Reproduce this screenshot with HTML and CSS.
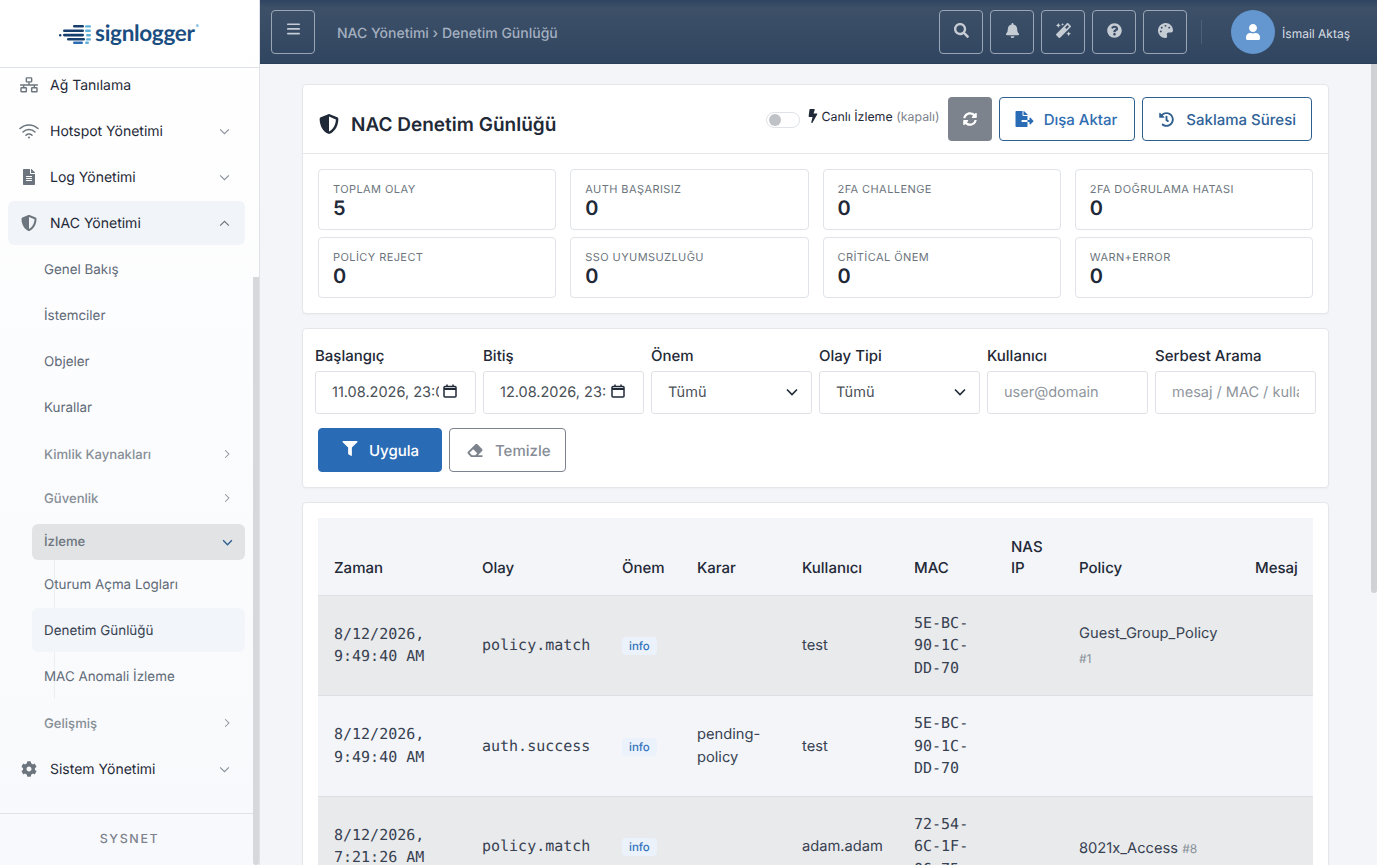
FILE: index.html
```html
<!DOCTYPE html>
<html lang="tr">
<head>
<meta charset="utf-8">
<title>NAC Denetim Günlüğü</title>
<link rel="stylesheet" href="styles.css">
</head>
<body>
<div class="app">
  <aside class="sidebar">
    <div class="brand">
      <svg class="brand-mark" viewBox="0 0 32 19">
        <g fill="#173f6e">
          <rect x="14" y="0" width="11" height="2.6" rx="1.3"/>
          <rect x="4" y="4.4" width="21" height="2.6" rx="1.3"/>
          <rect x="0" y="9" width="2.4" height="2.4" rx="1.2"/>
          <rect x="4" y="8.8" width="21" height="2.6" rx="1.3"/>
          <rect x="8" y="13" width="18" height="2.6" rx="1.3"/>
        </g>
        <rect x="14" y="16.6" width="10" height="2.4" rx="1.2" fill="#2a6bb5"/>
        <g fill="#5fb0da">
          <rect x="26" y=".2" width="6" height="2.4" rx="1.2"/>
          <rect x="26" y="4.6" width="6" height="2.4" rx="1.2"/>
          <rect x="27" y="9" width="5" height="2.4" rx="1.2"/>
          <rect x="27" y="13.2" width="5" height="2.4" rx="1.2"/>
          <rect x="26" y="16.6" width="4" height="2.4" rx="1.2"/>
        </g>
      </svg>
      <span class="brand-name">signlogger</span><span class="brand-tm">®</span>
    </div>
    <nav class="nav">
      <a class="nav-item"><svg class="nav-ico ico-net" viewBox="0 0 20 18" fill="none" stroke="#6c757d" stroke-width="1.6"><rect x="7" y="1" width="6" height="4.5" rx=".6"/><rect x="1" y="12" width="6" height="4.5" rx=".6"/><rect x="13" y="12" width="6" height="4.5" rx=".6"/><path d="M0 9h20M10 5.5V9M4 9v3M16 9v3"/></svg><span class="nav-label">Ağ Tanılama</span></a>
      <a class="nav-item"><svg class="nav-ico" viewBox="0 0 20 16" fill="none" stroke="#6c757d" stroke-width="1.5" stroke-linecap="round"><path d="M1 5.5a13 13 0 0 1 18 0M4 9a8.6 8.6 0 0 1 12 0M7 12.2a4.2 4.2 0 0 1 6 0"/><circle cx="10" cy="14.6" r="1" fill="#6c757d" stroke="none"/></svg><span class="nav-label">Hotspot Yönetimi</span><svg class="chev" viewBox="0 0 12 8"><path d="M1 1.5l5 5 5-5"/></svg></a>
      <a class="nav-item"><svg class="nav-ico ico-file" viewBox="0 0 384 512" fill="#6c757d"><path d="M224 136V0H24C10.7 0 0 10.7 0 24v464c0 13.3 10.7 24 24 24h336c13.3 0 24-10.7 24-24V160H248c-13.2 0-24-10.8-24-24zm64 236c0 6.6-5.4 12-12 12H108c-6.6 0-12-5.4-12-12v-8c0-6.6 5.4-12 12-12h168c6.6 0 12 5.4 12 12v8zm0-64c0 6.6-5.4 12-12 12H108c-6.6 0-12-5.4-12-12v-8c0-6.6 5.4-12 12-12h168c6.6 0 12 5.4 12 12v8zm0-72v8c0 6.6-5.4 12-12 12H108c-6.6 0-12-5.4-12-12v-8c0-6.6 5.4-12 12-12h168c6.6 0 12 5.4 12 12zm96-114.1v6.1H256V0h6.1c6.4 0 12.5 2.5 17 7l97.9 98c4.5 4.5 7 10.6 7 16.9z"/></svg><span class="nav-label">Log Yönetimi</span><svg class="chev" viewBox="0 0 12 8"><path d="M1 1.5l5 5 5-5"/></svg></a>
      <a class="nav-item is-open"><svg class="nav-ico ico-shield" viewBox="0 0 512 512" fill="#6c757d"><path d="M466.5 83.7l-192-80a48.15 48.15 0 0 0-36.9 0l-192 80C27.7 91.1 16 108.6 16 128c0 198.5 114.5 335.7 221.5 380.3 11.8 4.9 25.1 4.9 36.9 0C360.1 472.6 496 349.3 496 128c0-19.4-11.7-36.9-29.5-44.3zM256.1 446.3l-.1-381 175.9 73.3c-3.3 151.4-82.1 261.1-175.8 307.7z"/></svg><span class="nav-label">NAC Yönetimi</span><svg class="chev" viewBox="0 0 12 8"><path d="M1 6.5l5-5 5 5"/></svg></a>
      <div class="subnav">
        <a class="sub-item">Genel Bakış</a>
        <a class="sub-item">İstemciler</a>
        <a class="sub-item">Objeler</a>
        <a class="sub-item">Kurallar</a>
        <a class="sub-group">Kimlik Kaynakları<svg class="chev-side" viewBox="0 0 8 12"><path d="M1.5 1l5 5-5 5"/></svg></a>
        <a class="sub-group sub-group-b">Güvenlik<svg class="chev-side" viewBox="0 0 8 12"><path d="M1.5 1l5 5-5 5"/></svg></a>
        <a class="sub-group is-open">İzleme<svg class="chev-down" viewBox="0 0 12 8"><path d="M1 1.5l5 5 5-5"/></svg></a>
        <div class="sub-tree">
          <a class="sub-item">Oturum Açma Logları</a>
          <a class="sub-item is-active">Denetim Günlüğü</a>
          <a class="sub-item">MAC Anomali İzleme</a>
        </div>
        <a class="sub-group sub-group-c">Gelişmiş<svg class="chev-side" viewBox="0 0 8 12"><path d="M1.5 1l5 5-5 5"/></svg></a>
      </div>
      <a class="nav-item nav-item-last"><svg class="nav-ico ico-cog" viewBox="0 0 512 512" fill="#6c757d"><path d="M487.4 315.7l-42.6-24.6c4.3-23.2 4.3-47 0-70.2l42.6-24.6c4.9-2.8 7.1-8.6 5.5-14-11.1-35.6-30-67.8-54.7-94.6-3.8-4.1-10-5.1-14.8-2.3L380.8 110c-17.9-15.4-38.5-27.3-60.8-35.1V25.8c0-5.6-3.9-10.5-9.4-11.7-36.7-8.2-74.3-7.8-109.2 0-5.5 1.2-9.4 6.1-9.4 11.7V75c-22.2 7.9-42.8 19.8-60.8 35.1L88.7 85.5c-4.9-2.8-11-1.9-14.8 2.3-24.7 26.7-43.6 58.9-54.7 94.6-1.7 5.4.6 11.2 5.5 14L67.3 221c-4.3 23.2-4.3 47 0 70.2l-42.6 24.6c-4.9 2.8-7.1 8.6-5.5 14 11.1 35.6 30 67.8 54.7 94.6 3.8 4.1 10 5.1 14.8 2.3l42.6-24.6c17.9 15.4 38.5 27.3 60.8 35.1v49.2c0 5.6 3.9 10.5 9.4 11.7 36.7 8.2 74.3 7.8 109.2 0 5.5-1.2 9.4-6.1 9.4-11.7v-49.2c22.2-7.9 42.8-19.8 60.8-35.1l42.6 24.6c4.9 2.8 11 1.9 14.8-2.3 24.7-26.7 43.6-58.9 54.7-94.6 1.5-5.5-.7-11.3-5.6-14.1zM256 336c-44.1 0-80-35.9-80-80s35.9-80 80-80 80 35.9 80 80-35.9 80-80 80z"/></svg><span class="nav-label">Sistem Yönetimi</span><svg class="chev" viewBox="0 0 12 8"><path d="M1 1.5l5 5 5-5"/></svg></a>
    </nav>
    <div class="side-foot">SYSNET</div>
    <div class="side-thumb"></div>
  </aside>

  <div class="main">
    <header class="topbar">
      <button class="top-btn"><svg class="ti ti-bars" viewBox="0 0 14 12" fill="#c6ccd4"><rect y="0" width="14" height="1.8" rx=".9"/><rect y="5" width="14" height="1.8" rx=".9"/><rect y="10" width="14" height="1.8" rx=".9"/></svg></button>
      <div class="crumb">NAC Yönetimi › Denetim Günlüğü</div>
      <div class="top-actions">
        <button class="top-btn"><svg class="ti" viewBox="0 0 512 512"><path d="M505 442.7L405.3 343c-4.5-4.5-10.6-7-17-7H372c27.6-35.3 44-79.7 44-128C416 93.1 322.9 0 208 0S0 93.1 0 208s93.1 208 208 208c48.3 0 92.7-16.4 128-44v16.3c0 6.4 2.5 12.5 7 17l99.7 99.7c9.4 9.4 24.6 9.4 33.9 0l28.3-28.3c9.4-9.4 9.4-24.6.1-34zM208 336c-70.7 0-128-57.2-128-128 0-70.7 57.2-128 128-128 70.7 0 128 57.2 128 128 0 70.7-57.2 128-128 128z"/></svg></button>
        <button class="top-btn"><svg class="ti" viewBox="0 0 448 512"><path d="M224 512c35.32 0 63.97-28.65 63.97-64H160.03c0 35.35 28.65 64 63.97 64zm215.39-149.71c-19.32-20.76-55.47-51.99-55.47-154.29 0-77.7-54.48-139.9-127.94-155.16V32c0-17.67-14.32-32-31.98-32s-31.98 14.33-31.98 32v20.84C118.56 68.1 64.08 130.3 64.08 208c0 102.3-36.15 133.53-55.47 154.29-6 6.45-8.66 14.16-8.61 21.71.11 16.4 12.98 32 32.1 32h383.8c19.12 0 32-15.6 32.1-32 .05-7.55-2.61-15.27-8.61-21.71z"/></svg></button>
        <button class="top-btn"><svg class="ti" viewBox="0 0 512 512"><path d="M224 96l16-32 32-16-32-16-16-32-16 32-32 16 32 16 16 32zM80 160l26.66-53.33L160 80l-53.34-26.67L80 0 53.34 53.33 0 80l53.34 26.67L80 160zm352 128l-26.66 53.33L352 368l53.34 26.67L432 448l26.66-53.33L512 368l-53.34-26.67L432 288zm70.62-193.77L417.77 9.38C411.53 3.12 403.34 0 395.15 0c-8.19 0-16.38 3.12-22.63 9.38L9.38 372.52c-12.5 12.5-12.5 32.76 0 45.25l84.85 84.85c6.25 6.25 14.44 9.37 22.62 9.37 8.19 0 16.38-3.12 22.63-9.37l363.14-363.15c12.5-12.48 12.5-32.75 0-45.24zM359.45 203.46l-50.91-50.91 86.6-86.6 50.91 50.91-86.6 86.6z"/></svg></button>
        <button class="top-btn"><svg class="ti" viewBox="0 0 512 512"><path d="M504 256c0 136.997-111.043 248-248 248S8 392.997 8 256C8 119.083 119.043 8 256 8s248 111.083 248 248zM262.655 90c-54.497 0-89.255 22.957-116.549 63.758-3.536 5.286-2.353 12.415 2.715 16.258l34.699 26.31c5.205 3.947 12.621 3.008 16.665-2.122 17.864-22.658 30.113-35.797 57.303-35.797 20.429 0 45.698 13.148 45.698 32.958 0 14.976-12.363 22.667-32.534 33.976C247.128 238.528 216 254.941 216 296v4c0 6.627 5.373 12 12 12h56c6.627 0 12-5.373 12-12v-1.333c0-28.462 83.186-29.647 83.186-106.667 0-58.002-60.165-102-116.531-102zM256 338c-25.365 0-46 20.635-46 46 0 25.364 20.635 46 46 46s46-20.636 46-46c0-25.365-20.635-46-46-46z"/></svg></button>
        <button class="top-btn"><svg class="ti" viewBox="0 0 512 512"><path d="M204.3 5C104.9 24.4 24.8 104.3 5.2 203.4c-37 187 131.7 326.4 258.8 306.7 41.2-6.4 61.4-54.6 42.5-91.7-23.1-45.4 9.9-98.4 60.9-98.4h79.7c35.8 0 64.8-29.6 64.9-65.3C511.5 97.1 368.1-26.9 204.3 5zM96 320c-17.7 0-32-14.3-32-32s14.3-32 32-32 32 14.3 32 32-14.3 32-32 32zm32-128c-17.7 0-32-14.3-32-32s14.3-32 32-32 32 14.3 32 32-14.3 32-32 32zm128-64c-17.7 0-32-14.3-32-32s14.3-32 32-32 32 14.3 32 32-14.3 32-32 32zm128 64c-17.7 0-32-14.3-32-32s14.3-32 32-32 32 14.3 32 32-14.3 32-32 32z"/></svg></button>
      </div>
      <div class="top-sep"></div>
      <div class="avatar"><svg viewBox="0 0 448 512" fill="#fff"><path d="M224 256c70.7 0 128-57.3 128-128S294.7 0 224 0 96 57.3 96 128s57.3 128 128 128zm89.6 32h-16.7c-22.2 10.2-46.9 16-72.9 16s-50.6-5.8-72.9-16h-16.7C60.2 288 0 348.2 0 422.4V464c0 26.5 21.5 48 48 48h352c26.5 0 48-21.5 48-48v-41.6c0-74.2-60.2-134.4-134.4-134.4z"/></svg></div>
      <div class="user-name">İsmail Aktaş</div>
    </header>

    <main class="content">
      <section class="card">
        <div class="card-head">
          <h1 class="title"><svg class="title-ico" viewBox="0 0 512 512" fill="#1f2937"><path d="M466.5 83.7l-192-80a48.15 48.15 0 0 0-36.9 0l-192 80C27.7 91.1 16 108.6 16 128c0 198.5 114.5 335.7 221.5 380.3 11.8 4.9 25.1 4.9 36.9 0C360.1 472.6 496 349.3 496 128c0-19.4-11.7-36.9-29.5-44.3zM256.1 446.3l-.1-381 175.9 73.3c-3.3 151.4-82.1 261.1-175.8 307.7z"/></svg>NAC Denetim Günlüğü</h1>
          <div class="head-tools">
            <span class="toggle"><i class="toggle-dot"></i></span>
            <span class="live"><svg class="bolt" viewBox="0 0 320 512" fill="#1f2937"><path d="M296 160H180.6l42.6-129.8C227.2 15 215.7 0 200 0H56C44 0 33.8 8.9 32.2 20.8l-32 240C-1.7 275.2 9.5 288 24 288h118.7L96.6 482.5c-3.6 15.2 8 29.5 23.3 29.5 8.4 0 16.4-4.4 20.8-12l176-304c9.3-15.9-2.2-36-20.7-36z"/></svg><span>Canlı İzleme <span class="live-off">(kapalı)</span></span></span>
            <button class="btn-refresh"><svg viewBox="0 0 512 512" fill="#fff"><path d="M370.72 133.28C339.458 104.008 298.888 87.962 255.848 88c-77.458.068-144.328 53.178-162.791 126.85-1.344 5.363-6.122 9.15-11.651 9.15H24.103c-7.498 0-13.194-6.807-11.807-14.176C33.933 94.924 134.813 8 256 8c66.448 0 126.791 26.136 171.315 68.685L463.03 40.97C478.149 25.851 504 36.559 504 57.941V192c0 13.255-10.745 24-24 24H345.941c-21.382 0-32.09-25.851-16.971-40.971l41.75-41.749zM32 296h134.059c21.382 0 32.09 25.851 16.971 40.971l-41.75 41.75c31.262 29.273 71.835 45.319 114.876 45.28 77.418-.07 144.315-53.144 162.787-126.849 1.344-5.363 6.122-9.15 11.651-9.15h57.304c7.498 0 13.194 6.807 11.807 14.176C478.067 417.076 377.187 504 256 504c-66.448 0-126.791-26.136-171.315-68.685L48.97 471.03C33.851 486.149 8 475.441 8 454.059V320c0-13.255 10.745-24 24-24z"/></svg></button>
            <button class="btn-outline"><svg class="bi-export" viewBox="0 0 576 512" fill="#2a6bb5"><path d="M384 121.9c0-6.3-2.5-12.4-7-16.9L279.1 7c-4.5-4.5-10.6-7-17-7H256v128h128zM571 308l-95.7-96.4c-10.1-10.1-27.4-3-27.4 11.3V288h-64v64h64v65.2c0 14.3 17.3 21.4 27.4 11.3L571 332c6.6-6.6 6.6-17.4 0-24zm-379 28v-32c0-8.8 7.2-16 16-16h176V160H248c-13.2 0-24-10.8-24-24V0H24C10.7 0 0 10.7 0 24v464c0 13.3 10.7 24 24 24h336c13.3 0 24-10.7 24-24V352H208c-8.8 0-16-7.2-16-16z"/></svg>Dışa Aktar</button>
            <button class="btn-outline btn-teal"><svg class="bi-history" viewBox="0 0 512 512" fill="#2f5f8f"><path d="M504 255.531c.253 136.64-111.18 248.372-247.82 248.468-59.015.042-113.223-20.53-155.822-54.911-11.077-8.94-11.905-25.541-1.839-35.607l11.267-11.267c8.609-8.609 22.353-9.551 31.891-1.984C173.062 425.135 212.781 440 256 440c101.705 0 184-82.311 184-184 0-101.705-82.311-184-184-184-48.814 0-93.149 18.969-126.068 49.932l50.754 50.754c10.08 10.08 2.941 27.314-11.313 27.314H24c-8.837 0-16-7.163-16-16V38.627c0-14.254 17.234-21.393 27.314-11.314l49.372 49.372C129.209 34.136 189.552 8 256 8c136.81 0 247.747 110.78 248 247.531zm-180.912 78.784l9.823-12.63c8.138-10.463 6.253-25.542-4.21-33.679L288 256.349V152c0-13.255-10.745-24-24-24h-16c-13.255 0-24 10.745-24 24v135.651l65.409 50.874c10.463 8.137 25.541 6.253 33.679-4.21z"/></svg>Saklama Süresi</button>
          </div>
        </div>
        <div class="stats">
          <div class="stat"><div class="stat-label">Toplam Olay</div><div class="stat-value">5</div></div>
          <div class="stat"><div class="stat-label">Auth Başarısız</div><div class="stat-value">0</div></div>
          <div class="stat"><div class="stat-label">2FA Challenge</div><div class="stat-value">0</div></div>
          <div class="stat"><div class="stat-label">2FA Doğrulama Hatası</div><div class="stat-value">0</div></div>
          <div class="stat"><div class="stat-label">Policy Reject</div><div class="stat-value">0</div></div>
          <div class="stat"><div class="stat-label">SSO Uyumsuzluğu</div><div class="stat-value">0</div></div>
          <div class="stat"><div class="stat-label">Critical Önem</div><div class="stat-value">0</div></div>
          <div class="stat"><div class="stat-label">Warn+Error</div><div class="stat-value">0</div></div>
        </div>
      </section>

      <section class="card filters">
        <div class="filter-grid">
          <label class="field"><span class="field-label">Başlangıç</span><span class="input-wrap"><input class="input input-date" type="text" value="11.08.2026, 23:00" readonly><svg class="cal" viewBox="0 0 14 14" fill="none" stroke="#1f2937"><rect x="1" y="2.5" width="12" height="10.5" rx="1" stroke-width="1.5"/><path d="M1 5h12" stroke-width="2"/><path d="M4 .5v2M10 .5v2" stroke-width="1.5"/></svg></span></label>
          <label class="field"><span class="field-label">Bitiş</span><span class="input-wrap"><input class="input input-date input-date-b" type="text" value="12.08.2026, 23:" readonly><svg class="cal" viewBox="0 0 14 14" fill="none" stroke="#1f2937"><rect x="1" y="2.5" width="12" height="10.5" rx="1" stroke-width="1.5"/><path d="M1 5h12" stroke-width="2"/><path d="M4 .5v2M10 .5v2" stroke-width="1.5"/></svg></span></label>
          <label class="field"><span class="field-label">Önem</span><span class="input-wrap"><span class="input select">Tümü</span><svg class="sel-arrow" viewBox="0 0 12 8"><path d="M1 1.5l5 5 5-5"/></svg></span></label>
          <label class="field"><span class="field-label">Olay Tipi</span><span class="input-wrap"><span class="input select">Tümü</span><svg class="sel-arrow" viewBox="0 0 12 8"><path d="M1 1.5l5 5 5-5"/></svg></span></label>
          <label class="field"><span class="field-label">Kullanıcı</span><span class="input-wrap"><input class="input" type="text" placeholder="user@domain"></span></label>
          <label class="field"><span class="field-label">Serbest Arama</span><span class="input-wrap"><input class="input" type="text" placeholder="mesaj / MAC / kullanıcı"></span></label>
        </div>
        <div class="filter-actions">
          <button class="btn-primary"><svg class="bi-filter" viewBox="0 0 512 512" fill="#fff"><path d="M487.976 0H24.028C2.71 0-8.047 25.866 7.058 40.971L192 225.941V432c0 7.831 3.821 15.17 10.237 19.662l80 55.98C298.02 518.69 320 507.493 320 487.98V225.941l184.947-184.97C520.021 25.896 509.338 0 487.976 0z"/></svg>Uygula</button>
          <button class="btn-clear"><svg class="bi-eraser" viewBox="0 0 512 512" fill="#7d838c"><path d="M497.941 273.941c18.745-18.745 18.745-49.137 0-67.882l-160-160c-18.745-18.745-49.137-18.745-67.882 0l-256 256c-18.745 18.745-18.745 49.137 0 67.882l96 96A48.004 48.004 0 0 0 144 480h356c6.627 0 12-5.373 12-12v-40c0-6.627-5.373-12-12-12H355.883l142.058-142.059zm-302.627-62.627l137.373 137.373L265.373 416H150.628l-80-80 124.686-124.686z"/></svg>Temizle</button>
        </div>
      </section>

      <section class="card table-card">
        <table class="log-table">
          <thead>
            <tr><th>Zaman</th><th>Olay</th><th>Önem</th><th>Karar</th><th>Kullanıcı</th><th>MAC</th><th>NAS IP</th><th>Policy</th><th>Mesaj</th></tr>
          </thead>
          <tbody>
            <tr><td class="mono">8/12/2026, 9:49:40 AM</td><td class="mono">policy.match</td><td><span class="badge">info</span></td><td></td><td>test</td><td class="mono">5E-BC-90-1C-DD-70</td><td></td><td class="policy">Guest_Group_Policy <small class="ref">#1</small></td><td></td></tr>
            <tr><td class="mono">8/12/2026, 9:49:40 AM</td><td class="mono">auth.success</td><td><span class="badge">info</span></td><td>pending-policy</td><td>test</td><td class="mono">5E-BC-90-1C-DD-70</td><td></td><td></td><td></td></tr>
            <tr><td class="mono">8/12/2026, 7:21:26 AM</td><td class="mono">policy.match</td><td><span class="badge">info</span></td><td></td><td>adam.adam</td><td class="mono">72-54-6C-1F-06-75</td><td></td><td class="policy">8021x_Access <small class="ref">#8</small></td><td></td></tr>
            <tr><td class="mono">8/12/2026, 7:21:26 AM</td><td class="mono">auth.success</td><td><span class="badge">info</span></td><td>pending-policy</td><td>adam.adam</td><td class="mono">72-54-6C-1F-06-75</td><td></td><td></td><td></td></tr>
            <tr><td class="mono">8/12/2026, 7:18:02 AM</td><td class="mono">policy.match</td><td><span class="badge">info</span></td><td></td><td>adam.adam</td><td class="mono">72-54-6C-1F-06-75</td><td></td><td class="policy">8021x_Access <small class="ref">#8</small></td><td></td></tr>
          </tbody>
        </table>
      </section>
    </main>
    <div class="main-thumb"></div>
  </div>
</div>
</body>
</html>
```

FILE: styles.css
```css
* { box-sizing: border-box; }
html, body { height: 100%; }
body {
  margin: 0;
  overflow: hidden;
  font-family: Inter, "Noto Sans", sans-serif;
  font-size: 15px;
  line-height: 1.5;
  color: #1f2937;
  background: #f3f5f9;
  text-rendering: geometricPrecision;
}
button, input { font-family: inherit; cursor: pointer; text-rendering: geometricPrecision; }
a { color: inherit; text-decoration: none; }
.app { display: flex; height: 100vh; }

/* Sidebar */
.sidebar {
  position: relative;
  width: 260px;
  flex: none;
  display: flex;
  flex-direction: column;
  height: 100%;
  background: linear-gradient(180deg, #ffffff 0%, #f8f9fc 100%);
  border-right: 1px solid #dfe2e6;
}
.brand {
  height: 68px;
  flex: none;
  display: flex;
  align-items: center;
  justify-content: center;
  gap: 4px;
  border-bottom: 1px solid #dfe2e6;
  padding-right: 1px;
}
.brand-mark { width: 32px; height: 19px; margin-top: 1px; }
.brand-name {
  font-family: Lato, sans-serif;
  font-size: 22.5px;
  line-height: 1;
  font-weight: 700;
  color: #1b4e80;
  letter-spacing: -.3px;
}
.brand-tm { font-size: 5px; color: #4fa3d1; margin: -12px 0 0 -3px; }
.nav {
  flex: 1;
  min-height: 0;
  overflow: hidden;
  display: flex;
  flex-direction: column;
  justify-content: flex-end;
  padding: 0 14px 23px 8px;
}
.nav-item {
  flex: none;
  height: 44px;
  margin-top: 2px;
  display: flex;
  align-items: center;
  padding: 0 15px 0 11px;
  border-radius: 6px;
  font-size: 14px;
  font-weight: 400;
  color: #1f2937;
}
.nav-item.is-open { background: #f1f4f8; }
.nav-item-last { padding-top: 2px; }
.nav-ico { width: 20px; height: 16px; flex: none; margin-right: 11px; }
.subnav {
  flex: none;
  display: flex;
  flex-direction: column;
  margin-top: 1px;
}
.nav-label { flex: 1; }
.chev { width: 11px; height: 7px; fill: none; stroke: #8a929c; stroke-width: 1.3; }
.nav-item.is-open .chev { stroke: #6c757d; }
.sub-item {
  flex: none;
  display: flex;
  align-items: center;
  height: 44px;
  margin: 1px 0 1px 24px;
  padding: 2px 0 0 12px;
  font-size: 13.4px;
  color: #5f6b78;
  border-radius: 6px;
}
.sub-item.is-active { background: #f2f5f9; color: #374151; }
.sub-group {
  flex: none;
  display: flex;
  align-items: center;
  justify-content: space-between;
  height: 36px;
  margin: 6px 0 4px 24px;
  padding: 3px 15px 0 12px;
  font-size: 13.1px;
  font-weight: 500;
  color: #868e96;
  border-radius: 6px;
}
.sub-group-b { margin-top: 4px; margin-bottom: 8px; }
.sub-group-c { margin-top: 6px; margin-bottom: 3px; }
.sub-group.is-open {
  background: #e2e3e5;
  color: #6c757d;
  margin: 0 0 1px 24px;
  padding: 2px 12px 0 12px;
}
.chev-side { width: 6px; height: 10px; fill: none; stroke: #8a929c; stroke-width: 1.4; margin-top: -3px; }
.chev-down { width: 11px; height: 7px; fill: none; stroke: #2f5f8f; stroke-width: 1.6; margin-top: -2px; }
.sub-tree { position: relative; display: flex; flex-direction: column; flex: none; }
.sub-tree::before {
  content: "";
  position: absolute;
  left: 46px;
  top: -1px;
  bottom: 0;
  width: 1px;
  background: #eceef2;
}
.sub-tree .sub-item { position: relative; }
.side-foot {
  flex: none;
  height: 52px;
  padding-top: 2px;
  border-top: 1px solid #dfe2e6;
  display: flex;
  align-items: center;
  justify-content: center;
  font-size: 12.5px;
  font-weight: 500;
  letter-spacing: 1.6px;
  color: #7d838c;
}
.side-thumb {
  position: absolute;
  right: 0;
  top: 277px;
  bottom: 0;
  width: 6px;
  background: #d6d8dc;
  border-radius: 0 0 3px 3px;
}

/* Main */
.main { position: relative; flex: 1; min-width: 0; display: flex; flex-direction: column; }
.main-thumb {
  position: absolute;
  right: 0;
  top: 64px;
  width: 6px;
  height: 529px;
  background: #cfd1d5;
  border-radius: 0 0 3px 3px;
}
.topbar {
  flex: none;
  height: 64px;
  display: flex;
  align-items: center;
  padding: 0 27px 0 11px;
  background: linear-gradient(180deg, #2e4460 0%, #3d5068 12%, #304560 100%);
  border-bottom: 1px solid #2b3f58;
}
.top-btn {
  width: 44px;
  height: 44px;
  padding: 0;
  flex: none;
  display: flex;
  align-items: center;
  justify-content: center;
  background: transparent;
  border: 1px solid #9aa6b5;
  border-radius: 4px;
}
.ti { width: 15px; height: 15px; fill: #c6ccd4; margin-top: -2px; }
.ti-bars { width: 13px; height: 12px; margin-top: -6px; }
.crumb {
  margin: 4px 0 0 22px;
  flex: 1;
  font-size: 14px;
  font-weight: 500;
  color: #a4b0c0;
  white-space: nowrap;
}
.top-actions { display: flex; gap: 7px; }
.top-sep { width: 1px; height: 24px; margin: 0 29px 0 14px; background: #4d6078; }
.avatar {
  width: 44px;
  height: 44px;
  flex: none;
  display: flex;
  align-items: center;
  justify-content: center;
  border-radius: 50%;
  background: #6497cf;
}
.avatar svg { width: 14px; height: 16px; }
.user-name { margin: 5px 0 0 7px; font-size: 12px; color: #d8dde3; white-space: nowrap; }

.content {
  flex: 1;
  min-height: 0;
  overflow: hidden;
  padding: 20px 48px 20px 42px;
}

.card {
  background: #fff;
  border: 1px solid #e4e6ea;
  border-radius: 4px;
  margin-bottom: 14px;
  box-shadow: 0 1px 2px rgba(0,0,0,.03);
}
.card-head {
  height: 69px;
  display: flex;
  align-items: center;
  justify-content: space-between;
  padding: 0 16px;
  border-bottom: 1px solid #e4e6ea;
}
.title {
  margin: 13px 0 0;
  display: flex;
  align-items: center;
  font-size: 19px;
  font-weight: 600;
  color: #1f2937;
}
.title-ico { width: 20px; height: 20px; margin: -3px 12px 0 0; }
.head-tools { display: flex; align-items: center; }
.toggle {
  position: relative;
  width: 34px;
  height: 16px;
  margin: 2px 8px 0 0;
  border: 1px solid #dfe2e6;
  border-radius: 8px;
  background: #fff;
}
.toggle-dot {
  position: absolute;
  left: 2px;
  top: 1px;
  width: 12px;
  height: 12px;
  border-radius: 50%;
  background: #bfc2c6;
}
.live { display: flex; align-items: center; gap: 3px; font-size: 12.4px; font-weight: 400; color: #1f2937; margin: -3px 8px 0 0; white-space: pre; }
.bolt { width: 10px; height: 14px; margin-top: -2px; }
.live-off { font-weight: 400; color: #7d838c; }
.btn-refresh {
  width: 44px;
  height: 44px;
  padding: 0;
  display: flex;
  align-items: center;
  justify-content: center;
  background: #7d838c;
  border: 0;
  border-radius: 4px;
  margin-right: 7px;
}
.btn-refresh svg { width: 14px; height: 14px; }
.btn-outline {
  height: 44px;
  padding: 0 17px 0 15px;
  display: flex;
  align-items: center;
  background: #fff;
  border: 1px solid #2f5f8f;
  border-radius: 4px;
  font-size: 15px;
  font-weight: 500;
  color: #2f6cb0;
}
.btn-teal { margin-left: 7px; color: #2f6298; padding: 0 15px 0 16px; }
.bi-export { width: 19px; height: 16px; margin-right: 10px; }
.bi-history { width: 15px; height: 15px; margin-right: 12px; }

.stats {
  display: grid;
  grid-template-columns: repeat(4, 1fr);
  gap: 7px 14px;
  padding: 15px;
}
.stat {
  height: 61px;
  padding: 12px 14px 0;
  border: 1px solid #e0e3e7;
  border-radius: 4px;
}
.stat-label {
  font-size: 11px;
  line-height: 14px;
  letter-spacing: .42px;
  text-transform: uppercase;
  color: #6c757d;
}
.stat-value { font-size: 20px; line-height: 24px; font-weight: 600; color: #1f2937; }

.filters { padding: 16px 12px 15px; }
.filter-grid { display: grid; grid-template-columns: repeat(6, 161px); gap: 7px; }
.field { display: block; }
.field-label { display: block; font-size: 15px; line-height: 22px; margin-bottom: 4px; font-weight: 500; color: #1f2937; }
.input-wrap { position: relative; display: block; }
.input {
  display: block;
  width: 100%;
  height: 43px;
  padding: 0 16px;
  border: 1px solid #dfe2e6;
  border-radius: 3px;
  background: #fff;
  font: 400 14.5px/41px Inter, sans-serif;
  color: #495057;
  outline: none;
}
.input::placeholder { color: #8f959c; opacity: 1; }
.input-date { padding-right: 36px; }
.input-date-b { padding-right: 32px; }
.cal { position: absolute; right: 19px; top: 13px; width: 14px; height: 14px; }
.sel-arrow { position: absolute; right: 14px; top: 17px; width: 12px; height: 8px; fill: none; stroke: #1f2937; stroke-width: 1.6; }
.filter-actions { display: flex; gap: 7px; margin: 14px 0 0 3px; }
.btn-primary, .btn-clear {
  height: 44px;
  display: flex;
  align-items: center;
  font-size: 15px;
  font-weight: 500;
  border-radius: 4px;
}
.btn-primary { width: 124px; padding: 0 0 0 23px; background: #2a6bb5; border: 1px solid #2a6bb5; color: #fff; }
.btn-clear { width: 117px; padding: 0 0 0 17px; background: #fff; border: 1px solid #7d838c; color: #868d96; }
.bi-filter { width: 16px; height: 15px; margin: -4px 11px 0 0; }
.bi-eraser { width: 16px; height: 15px; margin-right: 12px; }

.table-card { padding: 15px; }
.log-table { width: 995px; border-collapse: collapse; table-layout: fixed; font-size: 14.7px; color: #374151; }
.log-table th {
  height: 77px;
  padding: 16px;
  text-align: left;
  vertical-align: bottom;
  font-size: 15px;
  font-weight: 500;
  line-height: 21.5px;
  color: #1f2937;
  background: #f3f5f9;
  border-bottom: 1px solid #dcdfe3;
}
.log-table th:nth-child(1) { width: 148px; }
.log-table th:nth-child(2) { width: 140px; }
.log-table th:nth-child(3) { width: 75px; }
.log-table th:nth-child(4) { width: 105px; }
.log-table th:nth-child(5) { width: 112px; }
.log-table th:nth-child(6) { width: 97px; }
.log-table th:nth-child(7) { width: 68px; }
.log-table th:nth-child(8) { width: 176px; }
.log-table th:nth-child(9) { width: 74px; }
.log-table td {
  padding: 16px;
  line-height: 22.5px;
  vertical-align: middle;
  border-bottom: 1px solid #dcdfe3;
  background: #f3f5f9;
}
.log-table td.policy { padding-top: 17px; padding-bottom: 15px; }
.log-table tbody tr:nth-child(odd) td { background: #e9eaec; }
.log-table td.mono { font-family: "DejaVu Sans Mono", monospace; font-size: 15px; }
.badge {
  display: inline-block;
  padding: 1px 7px;
  border-radius: 4px;
  font-size: 11.5px;
  line-height: 16px;
  font-weight: 500;
  color: #3273bd;
  background: #ebf2fb;
}
.ref { display: inline-block; margin-top: 3px; font-size: 12px; color: #868e96; }
```
